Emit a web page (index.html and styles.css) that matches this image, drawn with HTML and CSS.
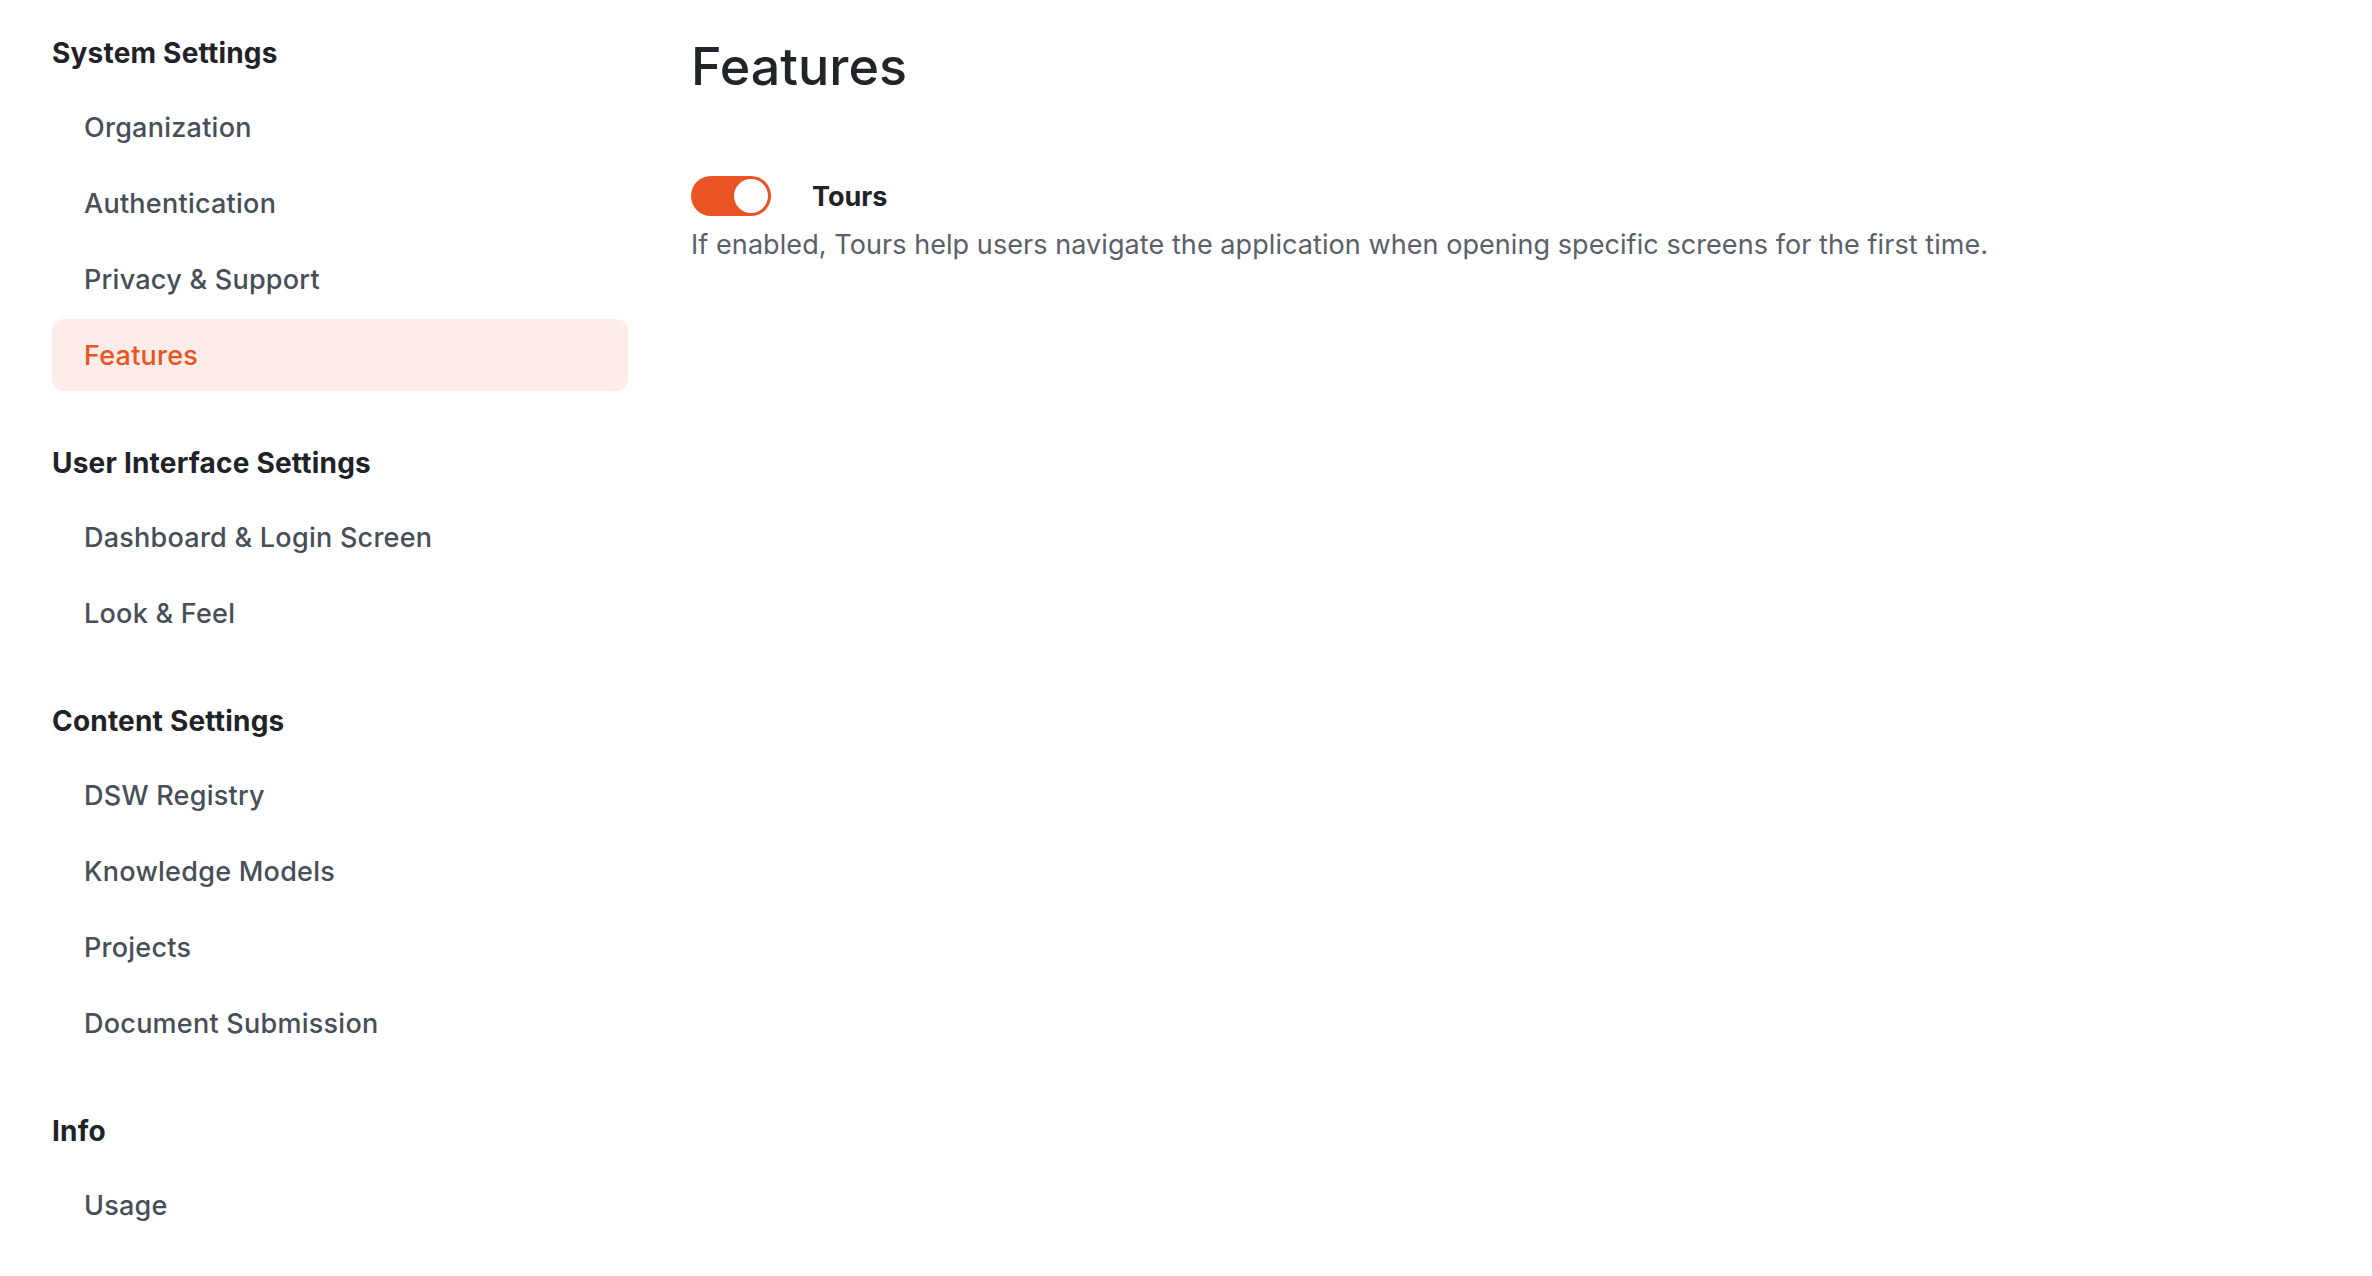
FILE: index.html
```html
<!DOCTYPE html>
<html lang="en">
<head>
<meta charset="utf-8">
<title>Settings – Features</title>
<link rel="stylesheet" href="styles.css">
</head>
<body>
<div class="layout">
  <nav class="sidebar">
    <section class="nav-section">
      <h3 class="nav-heading">System Settings</h3>
      <ul class="nav-list">
        <li><a class="nav-link" href="#">Organization</a></li>
        <li><a class="nav-link" href="#">Authentication</a></li>
        <li><a class="nav-link" href="#">Privacy &amp; Support</a></li>
        <li><a class="nav-link active" href="#">Features</a></li>
      </ul>
    </section>
    <section class="nav-section">
      <h3 class="nav-heading">User Interface Settings</h3>
      <ul class="nav-list">
        <li><a class="nav-link" href="#">Dashboard &amp; Login Screen</a></li>
        <li><a class="nav-link" href="#">Look &amp; Feel</a></li>
      </ul>
    </section>
    <section class="nav-section">
      <h3 class="nav-heading">Content Settings</h3>
      <ul class="nav-list">
        <li><a class="nav-link" href="#">DSW Registry</a></li>
        <li><a class="nav-link" href="#">Knowledge Models</a></li>
        <li><a class="nav-link" href="#">Projects</a></li>
        <li><a class="nav-link" href="#">Document Submission</a></li>
      </ul>
    </section>
    <section class="nav-section">
      <h3 class="nav-heading">Info</h3>
      <ul class="nav-list">
        <li><a class="nav-link" href="#">Usage</a></li>
      </ul>
    </section>
  </nav>
  <main class="content">
    <h1 class="page-title">Features</h1>
    <div class="form-group">
      <label class="switch-row">
        <span class="switch"><span class="switch-knob"></span></span>
        <span class="switch-label">Tours</span>
      </label>
      <p class="form-text">If enabled, Tours help users navigate the application when opening specific screens for the first time.</p>
    </div>
  </main>
</div>
</body>
</html>
```
FILE: styles.css
```css
* { box-sizing: border-box; }

html, body {
  margin: 0;
  padding: 0;
  background: #ffffff;
}

body {
  font-family: Inter, "Noto Sans", "Liberation Sans", sans-serif;
  color: #212529;
}

.layout {
  display: flex;
  align-items: flex-start;
  gap: 63px;
  padding-left: 52px;
}

.sidebar {
  width: 576px;
  flex: 0 0 576px;
  padding-top: 33px;
  display: flex;
  flex-direction: column;
  gap: 52px;
}

.nav-heading {
  margin: 0 0 18px 0;
  height: 40px;
  line-height: 40px;
  font-size: 28px;
  letter-spacing: 0.2px;
  font-weight: 700;
  color: #1f2328;
}

.nav-list {
  list-style: none;
  margin: 0;
  padding: 0;
  display: flex;
  flex-direction: column;
  gap: 4px;
}

.nav-link {
  display: flex;
  align-items: center;
  height: 72px;
  padding: 0 32px;
  border-radius: 12px;
  font-size: 27px;
  letter-spacing: 0.25px;
  font-weight: 500;
  color: #474e57;
  text-decoration: none;
}

.nav-link.active {
  background: #fdece8;
  color: #e9541f;
}

.content {
  flex: 1;
  padding-top: 34px;
}

.page-title {
  margin: 0;
  font-size: 52px;
  line-height: 66px;
  font-weight: 500;
  color: #212529;
}

.form-group {
  margin-top: 76px;
}

.switch-row {
  display: flex;
  align-items: center;
  gap: 41px;
  height: 40px;
}

.switch {
  position: relative;
  width: 80px;
  height: 40px;
  border-radius: 20px;
  background: #ea5424;
  flex: 0 0 80px;
}

.switch-knob {
  position: absolute;
  top: 3px;
  right: 3px;
  width: 34px;
  height: 34px;
  border-radius: 50%;
  background: #ffffff;
}

.switch-label {
  font-size: 27px;
  font-weight: 700;
  color: #1f2328;
}

.form-text {
  margin: 9px 0 0 0;
  font-size: 27px;
  letter-spacing: 0.07px;
  line-height: 40px;
  color: #5b6068;
}
```
